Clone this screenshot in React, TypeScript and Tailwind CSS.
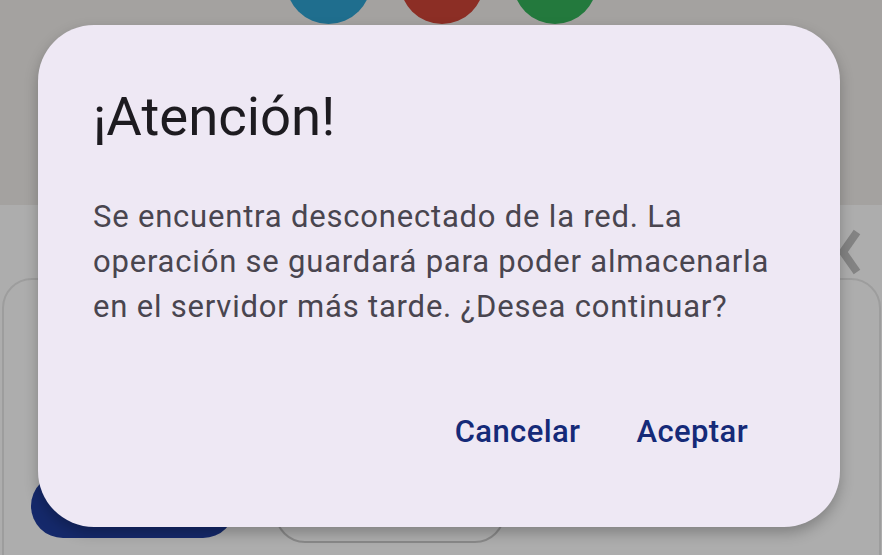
export default function App() {
  return (
    <div className="relative w-[882px] h-[555px] overflow-hidden bg-white font-['Roboto',sans-serif]">
      {/* page behind the dialog */}
      <div className="h-[205px] bg-[#f2efec] flex justify-center gap-[29px]">
        <div className="w-[85px] h-[85px] -mt-[61px] rounded-full bg-[#2ea2d2]" />
        <div className="w-[84px] h-[84px] -mt-[60px] rounded-full bg-[#ce4437]" />
        <div className="w-[84px] h-[84px] -mt-[60px] rounded-full bg-[#34b35b]" />
      </div>
      <div className="flex justify-end pr-[21px] pt-[24px]">
        <svg width="24" height="46" viewBox="0 0 24 46" fill="none">
          <path d="M20 3 L6 23 L20 43" stroke="#c2c2c2" strokeWidth="8" />
        </svg>
      </div>
      <div className="pl-[2px] pr-[1px] mt-[3px]">
        <div className="h-[320px] rounded-[30px] border-2 border-[#e8e8e8] flex gap-[40px] pl-[27px] pt-[194px]">
          <div className="w-[204px] h-[64px] rounded-[34px] bg-[#1f3d9e]" />
          <div className="w-[230px] h-[64px] mt-[5px] rounded-[30px] border-2 border-[#cbcbcb]" />
        </div>
      </div>

      {/* scrim */}
      <div className="absolute inset-0 bg-black/[0.32]" />

      {/* alert dialog */}
      <div className="absolute left-[38px] top-[25px] w-[802px] h-[502px] rounded-[56px] bg-[#eee8f4] shadow-[0_6px_14px_rgba(0,0,0,0.25)] flex flex-col pl-[55px] pr-[40px] pt-[60px]">
        <h1 className="text-[54.5px] leading-[62px] text-[#1d1b20]">¡Atención!</h1>
        <p className="mt-[47px] text-[31px] leading-[45px] tracking-[0.8px] text-[#49454f]">
          Se encuentra desconectado de la red. La operación se guardará para poder almacenarla en el servidor más tarde. ¿Desea continuar?
        </p>
        <div className="mt-[83px] pr-[52px] flex justify-end gap-[56px]">
          <button className="text-[31px] leading-[40px] tracking-[0.4px] font-medium text-[#152a78]">Cancelar</button>
          <button className="text-[31px] leading-[40px] tracking-[0.4px] font-medium text-[#152a78]">Aceptar</button>
        </div>
      </div>
    </div>
  );
}
